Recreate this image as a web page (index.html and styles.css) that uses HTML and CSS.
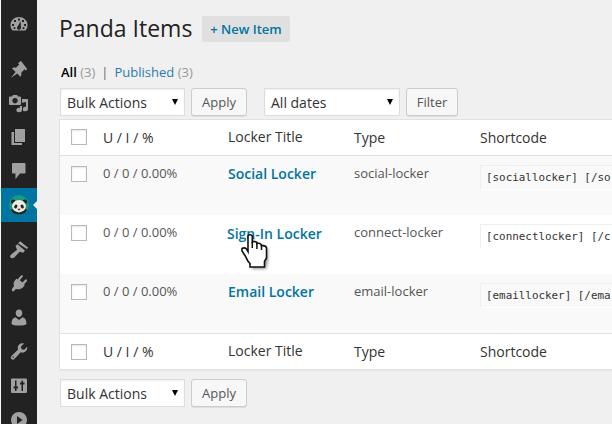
FILE: index.html
```html
<!DOCTYPE html>
<html lang="en">
<head>
<meta charset="utf-8">
<title>Panda Items</title>
<link rel="stylesheet" href="styles.css">
</head>
<body>
<div class="app">
<nav class="menu">
  <a class="item"><svg viewBox="0 0 20 20"><path fill-rule="evenodd" d="M3.500 16.500A8.700 8 0 0 1 1.400 11 8.600 8.200 0 0 1 10 3a8.600 8.200 0 0 1 8.600 8 8.700 8 0 0 1-2.100 5.500ZM9 4.400v2h2v-2ZM5 6v2h2V6Zm8 0v2h2V6ZM3 10v2h2v-2Zm12 0v2h2v-2ZM4.600 13.300v1.800h1.800v-1.800Zm9 0v1.800h1.800v-1.800ZM11.500 7 9 12a2 2 0 1 0 3 1.800Z"/></svg></a>
  <a class="item gap"><svg viewBox="0 0 20 20"><path d="M10.400 3 9.100 4.400l1.100 1-3.300 3.400C5.500 8.300 4 8.500 3 9.500L6.600 13 1.700 19l6.500-4.500 3.200 3.200c1-1 1.300-2.600.8-4l3.400-3.400 1.200 1.100L18.200 10 12 2Z"/></svg></a>
  <a class="item"><svg viewBox="0 0 20 20"><path fill-rule="evenodd" d="M1 3.500h2L4 2h4l1 1.500h2q1 0 1 1V11q0 1-1 1H1q-1 0-1-1V4.500q0-1 1-1ZM6 5a2.700 2.700 0 1 0 .01 0Z"/><path d="M13 6h6v10a2.600 2.300 0 1 1-2-2.200V9l-4 .8V17a2.800 2.300 0 1 1-2-2.200V13h2Z"/></svg></a>
  <a class="item"><svg viewBox="0 0 20 20"><path d="M6 15V2h10v13ZM5 5v11h8v2H2.500V5Z"/></svg></a>
  <a class="item"><svg viewBox="0 0 20 20"><path d="M4 2h11.500q1 0 1 1v8.500q0 1-1 1H11L6.500 18v-5.500H4q-1 0-1-1V3q0-1 1-1Z"/></svg></a>
  <a class="item current"><svg viewBox="0 0 20 20"><circle cx="10" cy="10" r="10" fill="#179a82"/><circle cx="4.200" cy="6.800" r="2.300" fill="#171d1a"/><circle cx="15.800" cy="6.800" r="2.300" fill="#171d1a"/><path d="M2 15c2-4 14-4 16 0-2 6-14 6-16 0" fill="#202725"/><ellipse cx="10" cy="11.200" rx="6.900" ry="6.200" fill="#eee9e2"/><ellipse cx="6.800" cy="11.500" rx="1.500" ry="2" transform="rotate(30 6.800 11.500)" fill="#222"/><ellipse cx="13.200" cy="11.500" rx="1.500" ry="2" transform="rotate(-30 13.200 11.500)" fill="#222"/><path d="M8.500 13.800h3L10 15.800Z" fill="#222"/></svg></a>
  <a class="item gap"><svg viewBox="0 0 20 20"><path d="m9 3.300 2.200-2.100 8 6.600-1.400 1.200ZM8.400 4.300l7.500 6.200-1.500 2.200-3.600-1-5.500 5.700c-1 1-3 1-3.800.3-.8-.8-.4-2.400.6-3.200L8 9.800 6.500 6Z"/></svg></a>
  <a class="item"><svg viewBox="0 0 20 20"><path d="m8.500 5.500 3.500-4q1.500-.9 2 .8l-3.200 4 2.500 2.300 3.200-3.200q2-.3 1.500 1.700L15 10.500l.8.8-2 2.200c-2 2-4.500 2-6.800 1.400L4.700 17.300H3v-2.600l2-2.500c-.7-2.200-.6-4.200 1.300-6.300L7.500 4.500Z"/></svg></a>
  <a class="item"><svg viewBox="0 0 20 20"><path d="M10 1.500c2 0 3.300 1.300 3.300 3.500S12 9 10 9 6.700 7.200 6.700 5 8 1.500 10 1.500ZM6.500 9.200 10 12l3.500-2.800c2.700.6 4 2.800 4 6.800-2 2-13 2-15 0 0-4 1.300-6.200 4-6.800Z"/></svg></a>
  <a class="item"><svg viewBox="0 0 20 20"><path fill-rule="evenodd" d="M16.700 9.300c-1.400 1.400-3.300 1.700-5 1l-6.300 6.600a2.100 2.100 0 0 1-3-3l6.700-6.300c-.8-1.800-.4-3.700 1-5.100C11.500 1.200 13.500.9 15 1.600L12 4.500l.5 2.700 2.700.5 2.900-2.900c.6 1.500 0 3.100-1.400 4.500ZM3.500 14.500v1.300h1.300v-1.300Z"/></svg></a>
  <a class="item"><svg viewBox="0 0 20 20"><path fill-rule="evenodd" d="M3 2.500h14q1 0 1 1V16q0 1-1 1H3q-1 0-1-1V3.500q0-1 1-1ZM6 4.500v6H4.500v2H6V15h1.500v-2.500H9v-2H7.500v-6Zm6.500 0v2H11v2h1.500V15H14V8.500h1.500v-2H14v-2Z"/></svg></a>
  <a class="item"><svg viewBox="0 0 20 20"><path fill-rule="evenodd" d="M10 2a8 8 0 1 0 .01 0ZM8 6v8l5.500-4Z"/></svg></a>
</nav>
<main class="content">
  <header class="head"><h1>Panda Items</h1><a class="new">+ New Item</a></header>
  <div class="views"><b>All</b> <span class="count">(3)</span><span class="sep">|</span><a>Published</a> <span class="count">(3)</span></div>
  <div class="bar"><div class="select">Bulk Actions<i></i></div><a class="btn apply">Apply</a><div class="select dates">All dates<i></i></div><a class="btn filter">Filter</a></div>
  <section class="table">
    <div class="row th"><span class="check"></span><span>U / I / %</span><span class="up">Locker Title</span><span>Type</span><span>Shortcode</span></div>
    <div class="row alt"><span class="check"></span><span class="up">0 / 0 / 0.00%</span><a class="title">Social Locker</a><span class="up">social-locker</span><code>[sociallocker] [/so</code></div>
    <div class="row"><span class="check"></span><span class="up">0 / 0 / 0.00%</span><a class="title hover">Sign-In Locker<svg class="hand" viewBox="0 0 27 34"><path class="shade" d="M7 1h4v7l5 1 4 1 5 3v12l-2 8H9v-4L1 17v-3l6 1Z"/><path class="outline" d="M7 16V2.200Q7 .8 9 .8t2.300 1.400V8Q13 7 15.800 8.300v1.300Q19 8.600 20.500 11v.8q4-.8 5 2V24l-2 3.500V33H9v-3.500l-2-2.300-3-5.700-3-4.500v-2.500q2.500-1.500 4.500.5L7 17.500Z"/><path class="lines" d="M11.300 8v6M15.900 9v6M20.500 11v5"/></svg></a><span class="up">connect-locker</span><code>[connectlocker] [/c</code></div>
    <div class="row alt"><span class="check"></span><span class="up">0 / 0 / 0.00%</span><a class="title">Email Locker</a><span class="up">email-locker</span><code>[emaillocker] [/ema</code></div>
    <div class="row th tf"><span class="check"></span><span>U / I / %</span><span class="up">Locker Title</span><span>Type</span><span>Shortcode</span></div>
  </section>
  <div class="bar bottom"><div class="select">Bulk Actions<i></i></div><a class="btn apply">Apply</a></div>
</main>
</div>
</body>
</html>
```
FILE: styles.css
```css
* { box-sizing: border-box; }
body { margin: 0; background: #f0f0f0; color: #333; font: 13px/18px "Open Sans", sans-serif; overflow: hidden; }
.app { display: flex; height: 424px; overflow: hidden; }
.menu { flex: 0 0 37px; border-left: 1px solid #f7f7f7; background: #222; padding-top: 7px; }
.item { display: flex; height: 34px; align-items: center; justify-content: center; position: relative; }
.item svg { width: 20px; height: 20px; fill: #a0a0a0; }
.gap { margin-top: 11px; }
.current { background: #0074a2; }
.current::after { content: ""; position: absolute; right: 0; top: 13px; border: 4px solid transparent; border-left: 0; border-right-color: #f0f0f0; }
.content { flex: 1; min-width: 0; padding: 16px 0 0 22px; }
.head { display: flex; height: 26px; align-items: center; }
h1 { margin: -2px 0 0; width: 143px; font-size: 23px; line-height: 26px; font-weight: 400; color: #222; white-space: nowrap; }
.new { width: 88px; height: 26px; line-height: 26px; text-align: center; background: #e0e0e0; border-radius: 2px; color: #0074a2; font-weight: 600; }
.views { height: 18px; margin: 21px 0 7px 2px; white-space: nowrap; }
.views b { color: #000; font-weight: 600; }
.views a { color: #2a7cab; }
.count { color: #999; }
.sep { margin: 0 6px 0 6px; color: #666; }
.bar { display: flex; height: 28px; margin-left: 1px; }
.select { width: 125px; border: 1px solid #ddd; background: #fff; box-shadow: inset 0 1px 2px rgba(0,0,0,.07); font-size: 14px; line-height: 27px; padding-left: 6px; position: relative; }
.select i { position: absolute; right: 6px; top: 10px; border: 3px solid transparent; border-top: 6px solid #000; border-bottom: 0; }
.dates { width: 136px; margin-left: 17px; }
.btn { width: 56px; margin-left: 6px; border: 1px solid #ccc; border-radius: 3px; background: #f7f7f7; box-shadow: 0 1px 0 rgba(0,0,0,.08); color: #555; line-height: 26px; text-align: center; }
.filter { width: 52px; }
.table { margin-top: 3px; border: 1px solid #e1e1e1; border-right: 0; background: #fff; box-shadow: 0 1px 1px rgba(0,0,0,.04); }
.row { display: grid; grid-template-columns: 32px 125px 126px 126px 1fr; height: 59px; padding: 9px 0 0 11px; color: #555; white-space: nowrap; align-items: start; }
.alt { background: #f9f9f9; }
.th { height: 36px; border-bottom: 1px solid #e1e1e1; color: #333; font-size: 14px; }
.tf { height: 36px; border-top: 1px solid #e1e1e1; border-bottom: 0; }
.up { margin-top: -1px; }
.check { width: 16px; height: 16px; margin-top: 1px; border: 1px solid #b4b9be; background: #fff; box-shadow: inset 0 1px 2px rgba(0,0,0,.1); }
.th .check { margin-top: 0; }
.tf .check { margin-top: 1px; }
.title { color: #0074a2; font-size: 14px; font-weight: 600; position: relative; }
.hover { left: -1px; top: 1px; }
.hand { position: absolute; left: 14px; top: 9px; width: 27px; height: 34px; overflow: visible; z-index: 1; }
.outline { fill: #fff; stroke: #111; stroke-width: 1.6; }
.lines { fill: none; stroke: #111; stroke-width: 1.5; }
.shade { fill: rgba(0,0,0,.4); transform: translate(2px,2px); filter: blur(1.5px); }
code { height: 25px; border: 1px solid #eee; border-right: 0; border-bottom-color: #fff; padding-left: 5px; font: 10.9px/23px "DejaVu Sans Mono", monospace; color: #333; }
.bottom { margin-top: 9px; }
```
